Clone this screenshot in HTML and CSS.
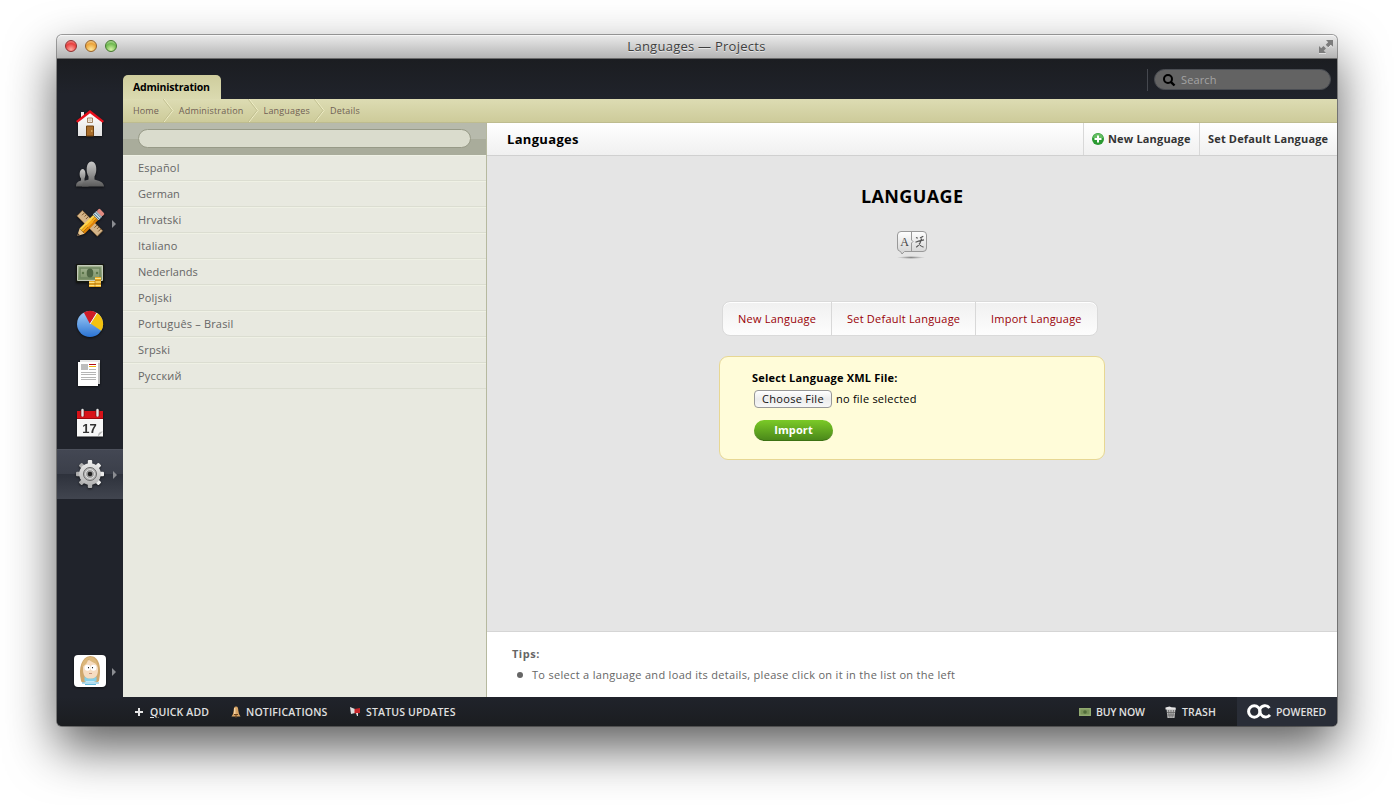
FILE: index.html
```html
<!DOCTYPE html>
<html lang="en">
<head>
<meta charset="utf-8">
<title>Languages — Projects</title>
<link rel="stylesheet" href="styles.css">
</head>
<body>
<div class="window">
  <header class="titlebar">
    <div class="lights"><i class="light red"></i><i class="light amber"></i><i class="light green"></i></div>
    <span class="title">Languages — Projects</span>
    <svg class="expand" width="16" height="16" viewBox="0 0 16 16"><path d="M8 2h7v7l-2.200-2.200-2.500 2.500-2.600-2.600 2.500-2.500z" fill="#7c7c7c"/><path d="M1 8l2.200 2.200L5.500 8l2.500 2.500-2.300 2.300L8 15H1z" fill="#7c7c7c"/><path d="M1 15.500h7M10.300 9.800l2.500-2.500 2.200 2.200" fill="none" stroke="#eee" stroke-width=".7"/></svg>
  </header>
  <div class="body">
    <nav class="sidebar">
      <a class="nav"><svg width="34" height="34" viewBox="0 0 34 34"><path d="M8 5h3v6H8z" fill="#eee"/><path d="M5 14L17 5l12 9v15H5z" fill="url(#gWhite)"/><path d="M3 14L17 3l14 11-1.500 1.800L17 6.300 4.500 15.800z" fill="#e8101c"/><path d="M14.500 11h5v4.500h-5z" fill="#f3ece4" stroke="#a3805f"/><path d="M17 11v4.500M14.500 13.200h5" stroke="#cdb79d" stroke-width=".6"/><path d="M13.500 19h7v10h-7z" fill="#a86d2b" stroke="#6f4212"/><circle cx="18.800" cy="24" r=".7" fill="#f2d58c"/></svg></a>
      <a class="nav"><svg width="34" height="34" viewBox="0 0 34 34"><path d="M3 29.500c0-4 2-5 5-6v-2c-2-2-2-9 1.500-9.500 3.500 0 3.500 7 2 9.500v2l4 2v4z" fill="url(#gGray)"/><path d="M9 29.500c0-5 3-6 6.500-7v-3C12.500 15 13 4.500 18.500 4.500s6 10.500 3 15v3c4 1 9.500 2.500 9.500 7z" fill="url(#gGray)"/></svg></a>
      <a class="nav"><svg width="34" height="34" viewBox="0 0 34 34"><g transform="translate(17 16.200) scale(.9) translate(-17 -17)"><g transform="rotate(45 17 17)"><path d="M1 13h32v8.500H1z" fill="#d4b488" stroke="#846033" stroke-width=".7"/><path d="M4.500 13v4M7.500 13v3M10.500 13v4M24 13v4M27 13v3M30 13v4" stroke="#765329"/></g><g transform="rotate(-45 17 17)"><path d="M-3 17l7.500-4v8z" fill="#edc991"/><path d="M-3 17l2.800-1.600v3.200z" fill="#4b3b2d"/><path d="M4.500 13H26v2.700H4.500z" fill="#ffd34c"/><path d="M4.500 15.700H26v2.800H4.500z" fill="#faad16"/><path d="M4.500 18.500H26V21H4.500z" fill="#df8308"/><path d="M26 12.500h5.500v9H26z" fill="#c3dce8"/><path d="M27.500 12.500v9M30 12.500v9" stroke="#4d5f69"/><rect x="31.500" y="12.700" width="4.500" height="8.600" rx="1.500" fill="#df8a80"/></g></g></svg><i class="arrow"></i></a>
      <a class="nav"><svg width="34" height="34" viewBox="0 0 34 34"><path d="M3 7h28v18.500H3z" fill="#15170f"/><path d="M4.500 8.500h25v15h-25z" fill="url(#gCash)" stroke="#c3caba"/><path d="M7 11h20v10H7z" fill="none" stroke="#6f8760" stroke-width="1.500"/><ellipse cx="17" cy="16" rx="3.300" ry="4.500" fill="#4f6644"/><circle cx="10" cy="16" r="1.200" fill="#5c7549"/><circle cx="24" cy="16" r="1.200" fill="#5c7549"/><path d="M22 20h6v10h-6zM16 24h6v6h-6z" fill="#e9ac28"/><path d="M22 21.500h6M22 25h6M16 25.500h6M22 28.500h6M16 28.500h6" stroke="#ffe483"/><path d="M22 23.300h6M22 26.800h6M16 27h6M22 24v6" stroke="#aa6b0c" stroke-width=".6"/></svg></a>
      <a class="nav"><svg width="34" height="34" viewBox="0 0 34 34"><circle cx="17" cy="17" r="13" fill="url(#gBlue)"/><path d="M17 17L10.800 5.600A13 13 0 0 1 23.500 5.700z" fill="#cf1c26"/><path d="M17.500 16.500L24 6a13 13 0 0 1 4.200 17.800z" fill="#f4c20f"/><path d="M17 17L24 6" fill="none" stroke="#f5f6fa"/></svg></a>
      <a class="nav"><svg width="34" height="34" viewBox="0 0 34 34"><path d="M7 3h20v24H7z" fill="#e8e8e8"/><path d="M26 6v21" stroke="#999"/><path d="M5 5h20v24H5z" fill="#fff"/><path d="M8 7h7v6H8z" fill="#bdbdbd"/><path d="M16 7h7v1h-7z" fill="#b30b18"/><path d="M16 9h7v1h-7z" fill="#f0b516"/><path d="M16 12.500h7M8 15.500h15M8 17.500h15M8 20.500h15M8 22.500h15" stroke="#b5b5b5"/></svg></a>
      <a class="nav"><svg width="34" height="34" viewBox="0 0 34 34"><path d="M4 4h26v9H4z" fill="#d81218"/><path d="M4 12h26v17.500H4z" fill="#f7f7f7"/><path d="M4 11h26v1H4z" fill="#9d080d"/><path d="M25 29.500c0-3 1-5 5-5z" fill="#b9b9b9"/><path d="M9.500 3v6.500M24.500 3v6.500" stroke="#7a1010" stroke-width="4"/><path d="M9.500 3v5.500M24.500 3v5.500" stroke="#e5e5e5" stroke-width="2.400" stroke-linecap="round"/><text x="16.500" y="25.800" class="caltext">17</text></svg></a>
      <a class="nav selected"><svg width="34" height="34" viewBox="0 0 34 34"><g fill="url(#gGear)"><rect x="14.800" y="3" width="4.400" height="28" rx="1"/><rect x="14.800" y="3" width="4.400" height="28" rx="1" transform="rotate(45 17 17)"/><rect x="14.800" y="3" width="4.400" height="28" rx="1" transform="rotate(90 17 17)"/><rect x="14.800" y="3" width="4.400" height="28" rx="1" transform="rotate(135 17 17)"/></g><circle cx="17" cy="17" r="10.800" fill="url(#gGear)"/><circle cx="17" cy="17" r="6.500" fill="#b9b9b9" stroke="#696969"/><circle cx="17" cy="17" r="4.400" fill="#9b9b9b" stroke="#dedede"/><circle cx="17" cy="17" r="2.300" fill="#222"/></svg><i class="arrow"></i></a>
      <a class="nav avatar"><svg width="32" height="32" viewBox="0 0 32 32"><rect width="32" height="32" rx="4" fill="#fff"/><path d="M7 26C4 12 8 2 16 1c9 0 12 11 9 25-2 2-4 1-5 0h-8c-1 2-4 2-5 0z" fill="#cfa76c"/><path d="M9 14c0-6 3-9 7-9s8 4 8 10-3 9-8 9-7-4-7-10z" fill="#f6dcc1"/><path d="M8 12c4-2 6-5 6-8 4 4 8 3 10 8-1-7-4-10-8-10S8 6 8 12z" fill="#dcb77b"/><circle cx="13.500" cy="12.700" r="3" fill="#fff"/><circle cx="19.500" cy="12.700" r="3" fill="#fff"/><circle cx="14.500" cy="12.700" r=".6"/><circle cx="18.500" cy="12.700" r=".6"/><path d="M15 18.500h3" stroke="#bc826b" stroke-width=".8"/><path d="M10.500 21.500l3 2h6l3-2v5h-12z" fill="#83cfe9"/><path d="M8 28h17M11 29.500h11" stroke="#62badd" stroke-width="1.200"/></svg><i class="arrow"></i></a>
    </nav>
    <div class="content">
      <div class="topbar">
        <div class="tab">Administration</div>
        <div class="searchwrap"><div class="search"><svg width="14" height="14" viewBox="0 0 14 14"><circle cx="6" cy="6" r="4" fill="none" stroke="#000" stroke-width="2"/><path d="M8.800 8.800l3.700 3.700" stroke="#000" stroke-width="2.400"/></svg><span>Search</span></div></div>
      </div>
      <div class="crumbs">
        <span class="home">Home</span><svg width="11" height="23" viewBox="0 0 11 23"><path d="M1 0l9 11.500L1 23" fill="none" stroke="#f0eec8"/><path d="M0 0l9 11.500L0 23" fill="none" stroke="#bdbb8b" stroke-width=".8"/></svg>
        <span>Administration</span><svg width="11" height="23" viewBox="0 0 11 23"><path d="M1 0l9 11.500L1 23" fill="none" stroke="#f0eec8"/><path d="M0 0l9 11.500L0 23" fill="none" stroke="#bdbb8b" stroke-width=".8"/></svg>
        <span>Languages</span><svg width="11" height="23" viewBox="0 0 11 23"><path d="M1 0l9 11.500L1 23" fill="none" stroke="#f0eec8"/><path d="M0 0l9 11.500L0 23" fill="none" stroke="#bdbb8b" stroke-width=".8"/></svg>
        <span>Details</span>
      </div>
      <div class="panes">
        <aside class="list">
          <div class="filter"><div class="filterbox"></div></div>
          <ul class="langs">
            <li>Español</li>
            <li class="tight">German</li>
            <li>Hrvatski</li>
            <li>Italiano</li>
            <li class="tight">Nederlands</li>
            <li>Poljski</li>
            <li>Português – Brasil</li>
            <li>Srpski</li>
            <li>Русский</li>
          </ul>
        </aside>
        <main class="detail">
          <div class="head">
            <h1>Languages</h1>
            <a class="act new"><svg width="12" height="12" viewBox="0 0 12 12"><circle cx="6" cy="6" r="6" fill="#2a9a31"/><path d="M1 5a5 4.500 0 0 1 10 0z" fill="#64bd62"/><path d="M6 2.500v7M2.500 6h7" stroke="#fff" stroke-width="2"/></svg><span>New Language</span></a>
            <a class="act default"><span>Set Default Language</span></a>
          </div>
          <section class="stage">
            <h2>LANGUAGE</h2>
            <svg class="langicon" width="32" height="30" viewBox="0 0 32 30"><ellipse cx="15" cy="27.500" rx="14" ry="1.500" fill="url(#gShadow)"/><path d="M5 1.500h22q3.500 0 3.500 3.500v13q0 3.500-3.500 3.500H8.500l-2.500 2.500-1.500-2.500q-3-.5-3-3.500V5q0-3.500 3.500-3.500z" fill="url(#gBubble)" stroke="#999"/><path d="M15.500 2v8l1.500 1.500-1.500 1.500v8" fill="none" stroke="#999"/><text x="8.600" y="15.500" class="a">A</text><path d="M20 7.500l1.800.8M19.500 12.200l3-1 5.500-1.300M24 8l3.300-1.800M25.500 8.500c-.5 3.500-2 6.500-5.300 8.700M23 13.500c1 2 2.500 3.300 4.500 3.700" fill="none" stroke="#555" stroke-width="1.200"/></svg>
            <div class="links"><a class="l1">New Language</a><a class="l2">Set Default Language</a><a class="l3">Import Language</a></div>
            <div class="form">
              <label>Select Language XML File:</label>
              <div class="file"><button class="choose">Choose File</button><span class="none">no file selected</span></div>
              <button class="import">Import</button>
            </div>
          </section>
          <section class="tips"><h3>Tips:</h3><ul><li>To select a language and load its details, please click on it in the list on the left</li></ul></section>
        </main>
      </div>
    </div>
  </div>
  <footer class="footer">
    <a class="f1"><svg width="10" height="10" viewBox="0 0 10 10"><path d="M5 1v8M1 5h8" stroke="#e5e5e5" stroke-width="2"/></svg><span><u>Q</u>UICK ADD</span></a>
    <a class="f2"><svg width="10" height="12" viewBox="0 0 10 12"><path d="M5 0.500c2 0 2.200 2 2.300 4L8 8l1.500 2.500H.5L2 8l.7-3.500C2.800 2.500 3 .5 5 .5z" fill="#d9a565"/><path d="M3.800 2v6" stroke="#ffe7c1"/><path d="M3 8.500h4M5 9v3" stroke="#6b431c"/></svg><span>NOTIFICATIONS</span></a>
    <a class="f3"><svg width="11" height="11" viewBox="0 0 11 11"><path d="M0 1l5 2v4L1 8z" fill="#ddd"/><path d="M4.500 3L10 2v5l-5.500.5z" fill="#c9262a"/><path d="M6 7h2v3H7z" fill="#ddd"/></svg><span>STATUS UPDATES</span></a>
    <a class="f4"><svg width="12" height="8" viewBox="0 0 12 8"><path d="M0 0h12v8H0z" fill="#91aa70"/><path d="M1.500 1.500h9v5h-9z" fill="#789258"/><circle cx="6" cy="4" r="1.800" fill="#506b39"/></svg><span>BUY NOW</span></a>
    <a class="f5"><svg width="12" height="12" viewBox="0 0 12 12"><path d="M1.500 3h9l-1 9h-7z" fill="#bcbcbc"/><path d="M.5 1.500l4-1 2 .8 4 .2.500 2H.5z" fill="#e4e4e4"/><path d="M3.500 4l.8 7.500M6 4v7.500M8.500 4l-.8 7.500M2 6.500h8M2.500 9h7" stroke="#656565" stroke-width=".8"/></svg><span>TRASH</span></a>
    <a class="powered"><svg width="24" height="15" viewBox="0 0 24 15"><circle cx="7.300" cy="7.500" r="5.700" fill="none" stroke="#fff" stroke-width="3"/><path d="M22.500 4A5.500 5.500 0 0 0 13 5c-.8 3 0 4 1 5.500a5.600 5.600 0 0 0 9 .5" fill="none" stroke="#fff" stroke-width="2.800"/></svg><span>POWERED</span></a>
  </footer>
</div>
<svg class="defs" width="0" height="0"><defs>
<linearGradient id="gWhite" x2="0" y2="1"><stop stop-color="#fff"/><stop offset="1" stop-color="#e2e2e2"/></linearGradient>
<linearGradient id="gGray" x2="0" y2="1"><stop stop-color="#c9c9c9"/><stop offset="1" stop-color="#5c5c5c"/></linearGradient>
<linearGradient id="gCash" x2="0" y2="1"><stop stop-color="#a5b593"/><stop offset="1" stop-color="#7c9268"/></linearGradient>
<linearGradient id="gBlue" x2="0" y2="1"><stop stop-color="#a5d0f8"/><stop offset="1" stop-color="#2a73d3"/></linearGradient>
<linearGradient id="gGear" gradientUnits="userSpaceOnUse" x1="0" y1="3" x2="0" y2="31"><stop stop-color="#efefef"/><stop offset="1" stop-color="#acacac"/></linearGradient>
<linearGradient id="gBubble" x2="0" y2="1"><stop stop-color="#fff"/><stop offset="1" stop-color="#d2d2d2"/></linearGradient>
<radialGradient id="gShadow"><stop stop-color="#888"/><stop offset="1" stop-color="#888" stop-opacity="0"/></radialGradient>
</defs></svg>
</body>
</html>
```
FILE: styles.css
```css
* { box-sizing: border-box; }
body { margin: 0; height: 805px; overflow: hidden; background: #fff; font: 11px/16px "Open Sans", "Noto Sans", sans-serif; color: #666; padding: 35px 57px 0; }
span, a, label { white-space: nowrap; }
svg { flex: none; display: block; }
h1, h2, h3, ul { margin: 0; padding: 0; list-style: none; font-size: inherit; }
button { font: inherit; padding: 0; }
.defs { position: absolute; }
.window { width: 1280px; height: 691px; display: flex; flex-direction: column; border-radius: 5px; background: #20232b; box-shadow: 0 0 0 1px rgba(0,0,0,.35), 0 22px 50px rgba(0,0,0,.64); }
.titlebar { height: 24px; flex: none; display: grid; grid-template-columns: 1fr auto 1fr; align-items: center; padding: 0 3px 0 8px; border-radius: 5px 5px 0 0; background: linear-gradient(#ebebeb, #b4b4b4); border-bottom: 1px solid #6a6a6a; box-shadow: inset 0 1px #f6f6f6; color: #3f3f3f; font-size: 13px; text-shadow: 0 1px #e6e6e6; }
.title { letter-spacing: .256px; margin: -2px 6px 0 0; }
.lights { display: flex; gap: 8px; margin-top: -1px; }
.light { width: 12px; height: 12px; border-radius: 50%; border: 1px solid; }
.red { background: radial-gradient(circle at 50% 85%, #ffaaa0, #e8403f 60%, #f6a7a2); border-color: #8f3030; }
.amber { background: radial-gradient(circle at 50% 85%, #ffe89a, #eba33a 60%, #fae0a9); border-color: #96622a; }
.green { background: radial-gradient(circle at 50% 85%, #d5f4a5, #6fb950 60%, #cdeab8); border-color: #45782f; }
.expand { justify-self: end; margin-top: -2px; }
.body { display: flex; flex: 1; min-height: 0; }
.sidebar { width: 66px; flex: none; display: flex; flex-direction: column; padding-top: 40px; background: linear-gradient(#1b1d21, #20232b 35px); }
.nav { height: 50px; display: flex; align-items: center; justify-content: center; position: relative; }
.nav svg { filter: drop-shadow(0 1px 1px rgba(0,0,0,.6)); }
.arrow { position: absolute; right: 7px; top: 21px; border: 4px solid transparent; border-left-color: #8b8d92; border-right: 0; }
.selected { background: linear-gradient(#434753, #3b3f4a 49%, #2e323c 50%, #41454f); border-top: 1px solid #4c505b; }
.selected svg { margin-bottom: 2px; }
.selected .arrow { right: 6px; }
.avatar { margin-top: auto; margin-bottom: 1px; }
.avatar .arrow { top: 22px; }
.caltext { font: bold 13px "Liberation Sans", sans-serif; text-anchor: middle; fill: #333; }
.content { flex: 1; display: flex; flex-direction: column; min-width: 0; }
.topbar { height: 40px; display: flex; justify-content: space-between; align-items: flex-end; background: linear-gradient(#1b1d21, #20232b); }
.tab { width: 98px; height: 24px; padding: 4px 10px 0; border-radius: 5px 5px 0 0; background: linear-gradient(#cfcd9d, #dbdab0); color: #000; font-weight: 700; font-size: 10.500px; letter-spacing: -.2px; }
.searchwrap { border-left: 1px solid #45484f; padding-left: 6px; margin: 0 6px 8px 0; height: 22px; }
.search { width: 177px; height: 21px; border-radius: 11px; background: #636363; border: 1px solid #4a4d53; display: flex; align-items: center; gap: 5px; padding-left: 7px; color: #a3a3a3; letter-spacing: .13px; }
.crumbs { height: 24px; flex: none; display: flex; align-items: center; background: linear-gradient(#dddcb3, #cdcb9a); border-bottom: 1px solid #bebc8f; padding-left: 10px; font-size: 9px; letter-spacing: .18px; color: #705f55; }
.crumbs svg { margin: 0 5px 0 4px; }
.crumbs .home { letter-spacing: .1px; }
.panes { flex: 1; display: flex; min-height: 0; }
.list { width: 364px; flex: none; background: #e8e9e0; border-right: 1px solid #b6b99f; }
.filter { height: 32px; background: linear-gradient(#b7baac 50%, #a9ac9b 50%); padding: 6px 15px; }
.filterbox { height: 19px; border-radius: 10px; background: #dadccd; border: 1px solid #979a87; }
.langs li { height: 26px; padding: 4px 15px 0; border-top: 1px solid #eff1e5; border-bottom: 1px solid #dbddd1; color: #666; letter-spacing: .18px; }
.langs .tight { letter-spacing: .03px; }
.detail { flex: 1; display: flex; flex-direction: column; background: #e5e5e5; }
.head { height: 33px; flex: none; display: flex; background: linear-gradient(#fff, #f0f0f0); border-bottom: 1px solid #d0d0d0; color: #333; font-weight: 700; }
.head h1 { flex: 1; padding: 8px 20px; font-size: 13px; letter-spacing: .316px; color: #000; }
.act { display: flex; align-items: center; gap: 4px; padding-left: 8px; border-left: 1px solid #d8d8d8; letter-spacing: .17px; }
.new { width: 116px; }
.default { width: 138px; }
.stage { flex: 1; }
.stage h2 { margin: 27px 0 0; padding-left: 374px; font-size: 18px; line-height: 26px; letter-spacing: .37px; color: #000; }
.langicon { margin: 21px 0 0 409px; }
.langicon .a { font: 12px "Liberation Serif", serif; text-anchor: middle; fill: #444; }
.links { display: flex; width: 376px; height: 35px; margin: 41px 0 0 235px; border: 1px solid #dadada; border-radius: 8px; background: linear-gradient(#f0f0f0, #fdfdfd); color: #990006; box-shadow: inset 0 1px #fff; letter-spacing: .22px; }
.links a { padding: 9px 0 0 15px; border-left: 1px solid #d8d8d8; }
.links .l1 { border: 0; width: 108px; }
.links .l2 { width: 144px; }
.form { width: 386px; height: 104px; margin: 20px 0 0 232px; padding: 13px 32px; border: 1px solid #e7d793; border-radius: 9px; background: #fffcd9; color: #000; }
.form label { display: block; font-weight: 700; letter-spacing: .2px; }
.file { display: flex; gap: 4px; margin: 4px 0 0 2px; align-items: center; letter-spacing: .234px; }
.choose { width: 78px; height: 18px; border: 1px solid #989898; border-radius: 4px; background: linear-gradient(#fff, #ececec 50%, #f7f7f7); color: #111; line-height: 16px; letter-spacing: .29px; }
.import { display: block; width: 79px; height: 21px; margin: 12px 0 0 2px; border: 0; border-bottom: 1px solid #3c7113; border-radius: 11px; background: linear-gradient(#7bca27, #4b891a); color: #fff; font-weight: 700; letter-spacing: .1px; }
.tips { height: 66px; border-top: 1px solid #d5d5d5; background: #fff; padding: 14px 25px; color: #666; }
.tips h3 { letter-spacing: .5px; }
.tips li { display: flex; align-items: center; margin-top: 5px; padding-left: 5px; letter-spacing: .311px; }
.tips li::before { content: ""; width: 6px; height: 6px; border-radius: 50%; background: #666; margin-right: 9px; }
.footer { height: 29px; flex: none; display: flex; align-items: center; padding-left: 77px; background: linear-gradient(#20232b, #1b1d20); border-radius: 0 0 5px 5px; color: #e0e0e0; font-weight: 600; font-size: 10.500px; letter-spacing: .16px; }
.footer a { display: flex; align-items: center; height: 29px; gap: 5px; }
.footer .f1 { width: 97px; gap: 6px; }
.f2 { width: 119px; }
.f4 { margin-left: auto; width: 86px; letter-spacing: -.2px; }
.f5 { width: 72px; }
.footer .powered { width: 100px; background: #292d37; padding-left: 10px; border-radius: 0 0 5px 0; letter-spacing: -.08px; }
```
